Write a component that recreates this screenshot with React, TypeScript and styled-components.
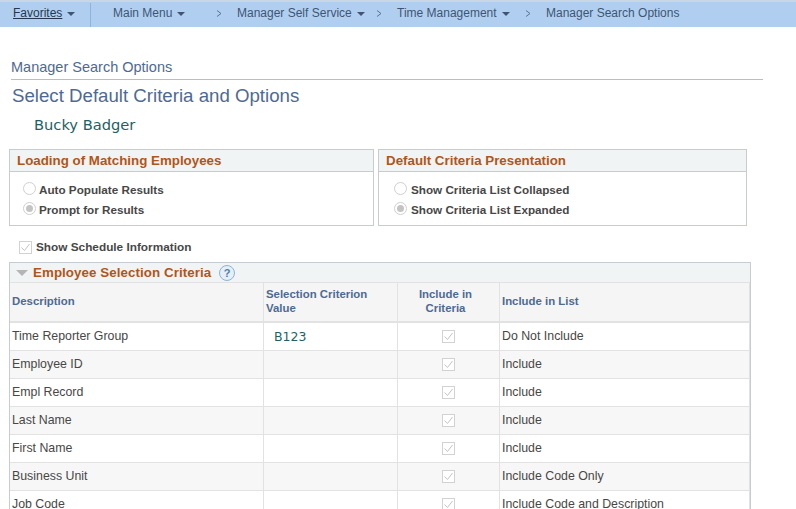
import React from "react";
import styled, { createGlobalStyle } from "styled-components";

const GlobalStyle = createGlobalStyle`
  html, body {
    margin: 0;
    padding: 0;
    background: #fff;
    overflow: hidden;
    font-family: "Liberation Sans", Arial, sans-serif;
  }
`;

const Page = styled.div`
  width: 796px;
  height: 509px;
  overflow: hidden;
`;

const NavBar = styled.div`
  height: 25px;
  border-top: 2px solid #c9d6e4;
  background: #b0cff0;
  display: flex;
  align-items: center;
  font-size: 12px;
  color: #3f5573;
`;

const FavoritesItem = styled.div`
  width: 91px;
  padding: 0 0 3px 13px;
  height: 24px;
  box-sizing: border-box;
  display: flex;
  align-items: center;
  border-right: 1px solid #8fb4dc;
  span {
    text-decoration: underline;
    color: #26384f;
  }
`;

const NavItem = styled.div<{ $width: number; $left: number }>`
  width: ${(p) => p.$width}px;
  padding-left: ${(p) => p.$left}px;
  margin-bottom: 3px;
  display: flex;
  align-items: center;
  white-space: nowrap;
`;

const Caret = styled.i`
  display: inline-block;
  margin-left: 5px;
  margin-top: 1px;
  border-left: 4px solid transparent;
  border-right: 4px solid transparent;
  border-top: 4px solid #3f5573;
`;

const Chevron = styled.svg`
  width: 7px;
  height: 9px;
  flex: none;
  margin-bottom: 3px;
`;

const Content = styled.div`
  padding: 31px 0 0 9px;
`;

const Breadcrumb = styled.div`
  margin-left: 2px;
  width: 752px;
  height: 21px;
  font-size: 14.5px;
  line-height: 18px;
  color: #4e6a94;
  border-bottom: 1px solid #bdbdbd;
  box-sizing: content-box;
`;

const Heading = styled.h1`
  margin: 5px 0 0 3px;
  font-size: 18.67px;
  line-height: 21px;
  font-weight: normal;
  color: #4e6a94;
`;

const UserName = styled.div`
  margin: 10px 0 0 25px;
  font-family: "DejaVu Sans", Verdana, sans-serif;
  font-size: 14.67px;
  line-height: 18px;
  color: #1f5f66;
`;

const GroupRow = styled.div`
  display: flex;
  gap: 4px;
  margin-top: 15px;
`;

const GroupBox = styled.section<{ $width: number; $indent: number }>`
  width: ${(p) => p.$width}px;
  height: 77px;
  box-sizing: border-box;
  border: 1px solid #c6ccd2;
  h2 {
    margin: 0;
    height: 22px;
    box-sizing: border-box;
    background: #f1f4f5;
    border-bottom: 1px solid #c6ccd2;
    padding-left: ${(p) => p.$indent}px;
    font-size: 13.33px;
    line-height: 21px;
    color: #b0561a;
  }
`;

const RadioList = styled.div<{ $indent: number }>`
  padding: 10px 0 0 ${(p) => p.$indent}px;
  display: flex;
  flex-direction: column;
  gap: 6px;
`;

const RadioRow = styled.div<{ $gap: number }>`
  display: flex;
  align-items: center;
  gap: ${(p) => p.$gap}px;
  height: 14px;
  font-size: 11.7px;
  font-weight: bold;
  color: #474747;
`;

const RadioDot = styled.span<{ $on?: boolean }>`
  width: 13px;
  height: 13px;
  flex: none;
  margin-top: -2px;
  box-sizing: border-box;
  border-radius: 50%;
  border: 1px solid #cfcfcf;
  background: #fff;
  display: flex;
  align-items: center;
  justify-content: center;
  &::after {
    content: "";
    width: 7px;
    height: 7px;
    border-radius: 50%;
    background: ${(p) => (p.$on ? "#c4c4c4" : "transparent")};
  }
`;

const ScheduleRow = styled.div`
  display: flex;
  align-items: center;
  gap: 4px;
  margin: 13px 0 0 10px;
  height: 16px;
  font-size: 11.8px;
  font-weight: bold;
  color: #474747;
`;

const CheckMark = styled.svg`
  width: 13px;
  height: 13px;
  flex: none;
  display: block;
`;

const CriteriaPanel = styled.section`
  margin-top: 7px;
  width: 742px;
  box-sizing: border-box;
  border: 1px solid #c6ccd2;
  border-bottom: 0;
`;

const PanelTitle = styled.div`
  height: 19px;
  background: #f1f4f5;
  display: flex;
  align-items: center;
  padding-left: 6px;
  font-size: 13.33px;
  font-weight: bold;
  color: #b0561a;
  letter-spacing: 0.07px;
`;

const Triangle = styled.i`
  display: inline-block;
  margin-right: 5px;
  border-left: 6px solid transparent;
  border-right: 6px solid transparent;
  border-top: 6px solid #b5b5b5;
`;

const HelpBadge = styled.span`
  width: 16px;
  height: 16px;
  margin-left: 8px;
  box-sizing: border-box;
  border-radius: 50%;
  border: 1px solid #8db3d6;
  background: #e6eef6;
  color: #4f7fae;
  font-size: 11px;
  line-height: 14px;
  text-align: center;
`;

const Grid = styled.div`
  display: grid;
  grid-template-columns: 254px 134px 102px 1fr;
`;

const HeadCell = styled.div<{ $center?: boolean }>`
  height: 41px;
  box-sizing: border-box;
  background: #f5f5f5;
  border-top: 1px solid #e2e2e2;
  border-right: 1px solid #e2e2e2;
  border-bottom: 2px solid #e2e2e2;
  padding: ${(p) => (p.$center ? "0 8px 3px 2px" : "0 2px 3px")};
  display: flex;
  align-items: center;
  justify-content: ${(p) => (p.$center ? "center" : "flex-start")};
  text-align: ${(p) => (p.$center ? "center" : "left")};
  font-size: 11.4px;
  line-height: 14px;
  font-weight: bold;
  color: #4e6a94;
`;

const Cell = styled.div<{ $alt: boolean; $center?: boolean }>`
  height: 28px;
  box-sizing: border-box;
  background: ${(p) => (p.$alt ? "#f7f7f7" : "#fff")};
  border-right: 1px solid #e2e2e2;
  border-bottom: 1px solid #e2e2e2;
  padding: ${(p) => (p.$center ? "0 2px" : "0 2px 2px")};
  display: flex;
  align-items: center;
  justify-content: ${(p) => (p.$center ? "center" : "flex-start")};
  font-size: 12.35px;
  color: #474747;
`;

const CriterionValue = styled.span`
  margin: 2px 0 0 8px;
  font-family: "DejaVu Sans", Verdana, sans-serif;
  font-size: 12.5px;
  color: #1f5f66;
`;

const rows = [
  ["Time Reporter Group", "B123", "Do Not Include"],
  ["Employee ID", "", "Include"],
  ["Empl Record", "", "Include"],
  ["Last Name", "", "Include"],
  ["First Name", "", "Include"],
  ["Business Unit", "", "Include Code Only"],
  ["Job Code", "", "Include Code and Description"],
];

function Check() {
  return (
    <CheckMark viewBox="0 0 13 13">
      <rect x="0.5" y="0.5" width="12" height="12" fill="#fff" stroke="#d2d2d2" />
      <path d="M2.5 6.5 L5.5 9.5 L10.5 3" fill="none" stroke="#c4c4c4" strokeWidth="1" />
    </CheckMark>
  );
}

function Sep() {
  return (
    <Chevron viewBox="0 0 7 9">
      <path d="M1 1.5 L5 4.5 L1 7.5" fill="none" stroke="#5d7390" strokeWidth="1" />
    </Chevron>
  );
}

export default function App() {
  return (
    <Page>
      <GlobalStyle />
      <NavBar>
        <FavoritesItem>
          <span>Favorites</span>
          <Caret />
        </FavoritesItem>
        <NavItem $width={103} $left={22}>
          Main Menu
          <Caret />
        </NavItem>
        <Sep />
        <NavItem $width={139} $left={14}>
          Manager Self Service
          <Caret />
        </NavItem>
        <Sep />
        <NavItem $width={128} $left={14}>
          Time Management
          <Caret />
        </NavItem>
        <Sep />
        <NavItem $width={160} $left={14}>
          Manager Search Options
        </NavItem>
      </NavBar>
      <Content>
        <Breadcrumb>Manager Search Options</Breadcrumb>
        <Heading>Select Default Criteria and Options</Heading>
        <UserName>Bucky Badger</UserName>
        <GroupRow>
          <GroupBox $width={365} $indent={7}>
            <h2>Loading of Matching Employees</h2>
            <RadioList $indent={13}>
              <RadioRow $gap={3}>
                <RadioDot />
                Auto Populate Results
              </RadioRow>
              <RadioRow $gap={3}>
                <RadioDot $on />
                Prompt for Results
              </RadioRow>
            </RadioList>
          </GroupBox>
          <GroupBox $width={369} $indent={7}>
            <h2>Default Criteria Presentation</h2>
            <RadioList $indent={15}>
              <RadioRow $gap={4}>
                <RadioDot />
                Show Criteria List Collapsed
              </RadioRow>
              <RadioRow $gap={4}>
                <RadioDot $on />
                Show Criteria List Expanded
              </RadioRow>
            </RadioList>
          </GroupBox>
        </GroupRow>
        <ScheduleRow>
          <Check />
          Show Schedule Information
        </ScheduleRow>
        <CriteriaPanel>
          <PanelTitle>
            <Triangle />
            Employee Selection Criteria
            <HelpBadge>?</HelpBadge>
          </PanelTitle>
          <Grid>
            <HeadCell>Description</HeadCell>
            <HeadCell>Selection Criterion Value</HeadCell>
            <HeadCell $center>
              Include in
              <br />
              Criteria
            </HeadCell>
            <HeadCell>Include in List</HeadCell>
            {rows.map(([label, value, list], i) => (
              <React.Fragment key={label}>
                <Cell $alt={i % 2 === 1}>{label}</Cell>
                <Cell $alt={i % 2 === 1}>
                  {value && <CriterionValue>{value}</CriterionValue>}
                </Cell>
                <Cell $alt={i % 2 === 1} $center>
                  <Check />
                </Cell>
                <Cell $alt={i % 2 === 1}>{list}</Cell>
              </React.Fragment>
            ))}
          </Grid>
        </CriteriaPanel>
      </Content>
    </Page>
  );
}
